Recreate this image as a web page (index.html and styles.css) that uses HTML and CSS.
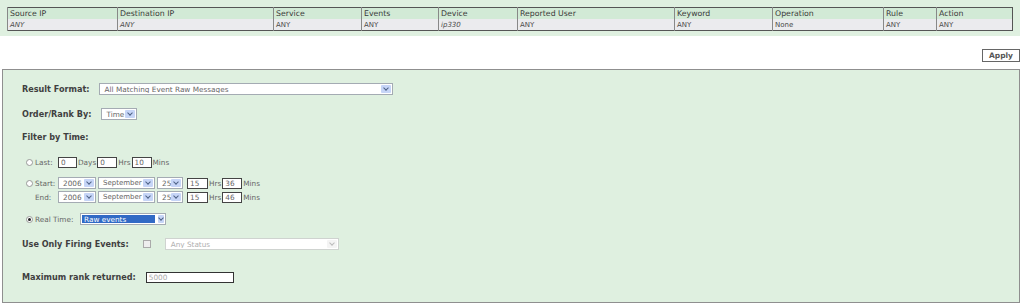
FILE: index.html
```html
<!DOCTYPE html>
<html lang="en">
<head>
  <meta charset="UTF-8">
  <title>Event Query</title>
  <link rel="stylesheet" href="styles.css">
</head>
<body>

  <div class="summary">
    <table>
      <colgroup>
        <col style="width:110px"><col style="width:156px"><col style="width:88px"><col style="width:77px"><col style="width:79px">
        <col style="width:157px"><col style="width:98px"><col style="width:111px"><col style="width:53px"><col style="width:76px">
      </colgroup>
      <tr>
        <th>Source IP</th><th>Destination IP</th><th>Service</th><th>Events</th><th>Device</th>
        <th>Reported User</th><th>Keyword</th><th>Operation</th><th>Rule</th><th>Action</th>
      </tr>
      <tr>
        <td class="em">ANY</td><td class="em">ANY</td><td>ANY</td><td>ANY</td><td class="em">ip330</td>
        <td>ANY</td><td>ANY</td><td>None</td><td>ANY</td><td>ANY</td>
      </tr>
    </table>
  </div>

  <div class="actions">
    <button class="apply-btn">Apply</button>
  </div>

  <div class="query-panel">
    <div class="row r-format">
      <span class="label">Result Format:</span>
      <span class="select w-format"><span class="value">All Matching Event Raw Messages</span><span class="arrow"></span></span>
    </div>

    <div class="row r-order">
      <span class="label">Order/Rank By:</span>
      <span class="select w-order"><span class="value">Time</span><span class="arrow"></span></span>
    </div>

    <div class="row r-filter">
      <span class="label">Filter by Time:</span>
    </div>

    <div class="row r-last time-row">
      <span class="radio"></span>
      <span class="small tlabel">Last:</span>
      <input class="text-in w19" type="text" value="0">
      <span class="small unit">Days</span>
      <input class="text-in w20" type="text" value="0">
      <span class="small unit">Hrs</span>
      <input class="text-in w20" type="text" value="10">
      <span class="small unit">Mins</span>
    </div>

    <div class="row r-start time-row">
      <span class="radio"></span>
      <span class="small tlabel">Start:</span>
      <span class="select w-year"><span class="value">2006</span><span class="arrow"></span></span>
      <span class="select w-month"><span class="value">September</span><span class="arrow"></span></span>
      <span class="select w-day"><span class="value">25</span><span class="arrow"></span></span>
      <input class="text-in w21" type="text" value="15">
      <span class="small unit">Hrs</span>
      <input class="text-in w20" type="text" value="36">
      <span class="small unit">Mins</span>
    </div>

    <div class="row r-end time-row">
      <span class="radio blank"></span>
      <span class="small tlabel">End:</span>
      <span class="select w-year"><span class="value">2006</span><span class="arrow"></span></span>
      <span class="select w-month"><span class="value">September</span><span class="arrow"></span></span>
      <span class="select w-day"><span class="value">25</span><span class="arrow"></span></span>
      <input class="text-in w21" type="text" value="15">
      <span class="small unit">Hrs</span>
      <input class="text-in w20" type="text" value="46">
      <span class="small unit">Mins</span>
    </div>

    <div class="row r-real time-row">
      <span class="radio checked"></span>
      <span class="small rtlabel">Real Time:</span>
      <span class="select w-real"><span class="value picked">Raw events</span><span class="arrow"></span></span>
    </div>

    <div class="row r-firing">
      <span class="label">Use Only Firing Events:</span>
      <span class="checkbox"></span>
      <span class="select disabled w-status"><span class="value">Any Status</span><span class="arrow"></span></span>
    </div>

    <div class="row r-max">
      <span class="label">Maximum rank returned:</span>
      <input class="text-in w-max" type="text" value="5000" disabled>
    </div>
  </div>

</body>
</html>
```

FILE: styles.css
```css
body {
  margin: 0;
  font-family: "DejaVu Sans", Verdana, sans-serif;
  color: #444;
  background-color: #fff;
}

.summary {
  width: 1020px;
  height: 36px;
  box-sizing: border-box;
  padding: 7px 0 0 7px;
  background-color: #dff0e0;
}

.summary table {
  border-collapse: collapse;
  table-layout: fixed;
  width: 1006px;
  border: 1px solid #555;
}

.summary th,
.summary td {
  height: 11px;
  padding: 0 0 0 2px;
  line-height: 10px;
  text-align: left;
  white-space: nowrap;
  overflow: hidden;
  border-left: 1px solid #888;
}

.summary th {
  font-size: 7.8px;
  font-weight: normal;
  color: #3a3a3a;
  background-color: #d2ead6;
}

.summary td {
  font-size: 7px;
  color: #4a4a4a;
  background-color: #ebebee;
}

.summary td.em {
  font-style: italic;
}

.actions {
  display: flex;
  justify-content: flex-end;
  padding: 13px 4px 7px 0;
}

.apply-btn {
  width: 38px;
  height: 13px;
  padding: 0;
  font-family: inherit;
  font-size: 7.5px;
  font-weight: bold;
  color: #555;
  background-color: #fff;
  border: 1px solid #666;
}

.query-panel {
  margin: 0 4px 0 2px;
  padding: 13px 0 19px 19px;
  background-color: #dff0e0;
  border: 1px solid #8f8f8f;
}

.row {
  display: flex;
  align-items: center;
  height: 12px;
}

.r-order { margin-top: 13px; }
.r-filter { margin-top: 11px; }
.r-last { margin-top: 13px; }
.r-start { margin-top: 9px; }
.r-end { margin-top: 2px; }
.r-real { margin-top: 10px; }
.r-firing { margin-top: 13px; }
.r-max { margin-top: 21px; }

.label {
  font-size: 8.1px;
  font-weight: bold;
  color: #3f3f3f;
}

.r-format .label { margin-right: 9px; }
.r-order .label { margin-right: 10px; }
.r-firing .label { margin-right: 14px; }
.r-max .label { margin-right: 10px; }

.small {
  font-size: 7.3px;
  color: #666;
}

.time-row {
  padding-left: 4px;
}

.tlabel {
  width: 23px;
}

.rtlabel {
  width: 45px;
}

.unit {
  margin: 0 1px;
}

.radio {
  width: 7px;
  height: 7px;
  margin-right: 2px;
  box-sizing: border-box;
  border: 1px solid #999;
  border-radius: 50%;
  background-color: #fff;
  display: flex;
  align-items: center;
  justify-content: center;
}

.radio.blank {
  visibility: hidden;
}

.radio.checked::after {
  content: "";
  width: 3px;
  height: 3px;
  border-radius: 50%;
  background-color: #222;
}

.text-in {
  height: 11px;
  box-sizing: border-box;
  padding: 0 2px;
  font-family: inherit;
  font-size: 7.3px;
  color: #666;
  background-color: #fff;
  border: 1px solid #444;
  outline: none;
}

.w19 { width: 19px; }
.w20 { width: 20px; }
.w21 { width: 21px; margin-left: 2px; }
.w-max { width: 88px; color: #aaa; border-color: #333; }

.select {
  display: flex;
  align-items: stretch;
  height: 12px;
  box-sizing: border-box;
  padding: 1px;
  background-color: #fff;
  border: 1px solid #a4abb3;
  margin-right: 2px;
}

.select .value {
  flex: 1;
  display: flex;
  align-items: center;
  padding-left: 4px;
  font-size: 7.3px;
  color: #666;
  white-space: nowrap;
  overflow: hidden;
}

.w-order .value,
.w-year .value,
.w-month .value,
.w-day .value {
  padding-left: 3px;
}

.w-month .value {
  font-size: 7px;
}

.select .value.picked {
  flex: none;
  width: 71px;
  margin-right: 3px;
  padding-left: 2px;
  color: #fff;
  background-color: #316ac5;
}

.select .arrow {
  width: 10px;
  display: flex;
  align-items: center;
  justify-content: center;
  background-color: #c6d5f7;
  border-radius: 1px;
}

.select .arrow::after {
  content: "";
  width: 3px;
  height: 3px;
  margin-top: -2px;
  border-right: 1.5px solid #4d6185;
  border-bottom: 1.5px solid #4d6185;
  transform: rotate(45deg);
}

.select.disabled {
  border-color: #cfd3d0;
}

.select.disabled .value {
  color: #b0b0b0;
}

.select.disabled .arrow {
  background-color: #f4f4f4;
}

.select.disabled .arrow::after {
  border-color: #bbb;
  border-width: 0 1px 1px 0;
}

.w-format { width: 294px; }
.w-order { width: 36px; }
.w-year { width: 38px; }
.w-month { width: 57px; }
.w-day { width: 26px; }
.w-real { width: 86px; }
.w-status { width: 174px; }

.checkbox {
  width: 8px;
  height: 8px;
  margin-right: 14px;
  box-sizing: border-box;
  border: 1px solid #aaa;
  background-color: #eee;
}
```
